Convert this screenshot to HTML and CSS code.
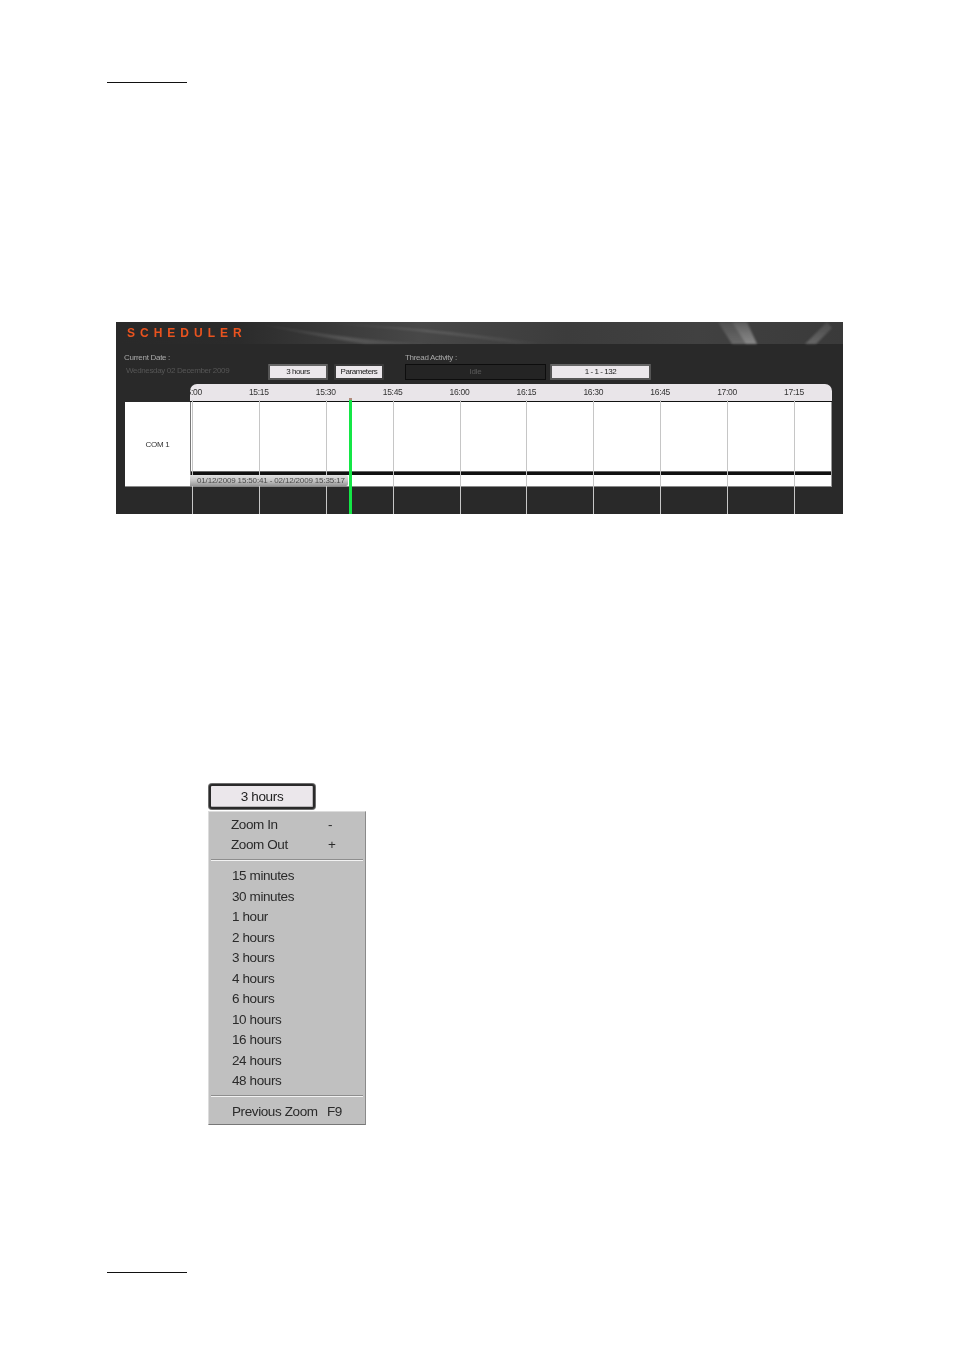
FILE: index.html
```html
<!DOCTYPE html>
<html lang="en">
<head>
<meta charset="utf-8">
<title>Scheduler</title>
<link rel="stylesheet" href="styles.css">
</head>
<body>
<div class="page">
  <div class="rule"></div>
  <section class="panel">
    <header class="band">
      <svg class="swirl" viewBox="0 0 727 22" preserveAspectRatio="none" aria-hidden="true">
        <defs>
          <linearGradient id="sw" x1="0" y1="0" x2="1" y2="0">
            <stop offset="0" stop-color="#fff" stop-opacity="0"/>
            <stop offset="0.5" stop-color="#fff" stop-opacity=".14"/>
            <stop offset="1" stop-color="#fff" stop-opacity="0"/>
          </linearGradient>
          <linearGradient id="st" x1="0" y1="0" x2="0" y2="1">
            <stop offset="0" stop-color="#fff" stop-opacity=".08"/>
            <stop offset="1" stop-color="#fff" stop-opacity=".22"/>
          </linearGradient>
        </defs>
        <path d="M130 0 C190 8 240 20 330 22 L250 22 C210 16 170 8 130 0Z" fill="url(#sw)"/>
        <path d="M190 0 C280 4 340 10 420 20 L430 22 L400 22 C340 12 270 5 190 0Z" fill="url(#sw)"/>
        <path d="M602 0 L616 22 L641 22 L631 0Z" fill="url(#st)"/>
        <path d="M616 0 L630 22 L641 22 L631 0Z" fill="url(#st)"/>
        <path d="M711 0 L689 22 L700 22 L716 6Z" fill="url(#st)"/>
      </svg>
      <h1 class="title">SCHEDULER</h1>
    </header>
    <div class="controls">
      <div class="date-col">
        <span class="label">Current Date :</span>
        <span class="date">Wednesday 02 December 2009</span>
      </div>
      <button class="btn btn-zoom">3 hours</button>
      <button class="btn btn-params">Parameters</button>
      <div class="thread-col">
        <span class="label">Thread Activity :</span>
        <div class="idle">Idle</div>
      </div>
      <button class="btn btn-range">1 - 1 - 132</button>
    </div>
    <div class="timeline">
      <div class="axis">
        <div class="axis-track">
          <span>15:00</span><span>15:15</span><span>15:30</span><span>15:45</span><span>16:00</span>
          <span>16:15</span><span>16:30</span><span>16:45</span><span>17:00</span><span>17:15</span>
        </div>
      </div>
      <div class="row">
        <div class="row-label">COM 1</div>
        <div class="chart">
          <div class="lane"></div>
          <div class="history"><div class="history-bar">01/12/2009 15:50:41 - 02/12/2009 15:35:17</div></div>
        </div>
      </div>
    </div>
    <div class="grid">
      <i></i><i></i><i></i><i></i><i></i><i></i><i></i><i></i><i></i><i></i>
    </div>
    <div class="now"></div>
  </section>

  <div class="menu-wrap">
    <button class="menu-btn">3 hours</button>
    <div class="menu">
      <div class="item cmd"><span class="name">Zoom In</span><span>-</span></div>
      <div class="item cmd"><span class="name">Zoom Out</span><span>+</span></div>
      <div class="sep"></div>
      <div class="item">15 minutes</div>
      <div class="item">30 minutes</div>
      <div class="item">1 hour</div>
      <div class="item">2 hours</div>
      <div class="item">3 hours</div>
      <div class="item">4 hours</div>
      <div class="item">6 hours</div>
      <div class="item">10 hours</div>
      <div class="item">16 hours</div>
      <div class="item">24 hours</div>
      <div class="item">48 hours</div>
      <div class="sep sep-last"></div>
      <div class="item prev"><span class="name">Previous Zoom</span><span>F9</span></div>
    </div>
  </div>
  <div class="rule rule-bottom"></div>
</div>
</body>
</html>
```
FILE: styles.css
```css
* { box-sizing: border-box; }
html, body { margin: 0; background: #fff; }
body { font-family: "Liberation Sans", Arial, sans-serif; color: #222; }
.page { padding: 82px 0 0 107px; width: 954px; height: 1350px; overflow: hidden; }
.rule { width: 80px; height: 1px; background: #111; }
.rule-bottom { margin-top: 147px; }

/* scheduler panel */
.panel { position: relative; width: 727px; height: 192px; margin: 239px 0 0 9px; background: #292929; overflow: hidden; filter: blur(.35px); }
.band { position: relative; height: 22px; background: linear-gradient(90deg, #292929 0, #2b2b2b 17%, #484848 42%, #3c3c3c 62%, #414141 80%, #3a3a3a 100%); }
.swirl { position: absolute; inset: 0; width: 100%; height: 100%; filter: blur(1px); }
.title { position: relative; margin: 0; padding: 5px 0 0 11px; font-size: 12px; line-height: 13px; font-weight: 700; letter-spacing: 5px; color: #e9531f; }

.controls { display: flex; align-items: flex-end; height: 40px; padding: 0 0 4px 8px; }
.label { display: block; font-size: 8px; line-height: 10px; letter-spacing: -.3px; color: #a9a9a9; }
.date-col { width: 144px; align-self: flex-end; padding-bottom: 3px; }
.date-col .label { margin-bottom: 3px; }
.date { display: block; margin-left: 2px; font-size: 8px; line-height: 10px; letter-spacing: -.35px; color: #565656; white-space: nowrap; padding-bottom: 1px; }
.btn { display: block; height: 16px; padding: 0; border: 2px solid #555; border-top-color: #666; border-radius: 1px; background: #ebe7eb; font: 8px/12px "Liberation Sans", Arial, sans-serif; letter-spacing: -.45px; color: #222; }
.btn-zoom { width: 60px; }
.btn-params { width: 50px; margin-left: 6px; border-color: #3a3a3a; }
.thread-col { width: 141px; margin-left: 21px; }
.thread-col .label { margin-bottom: 1px; }
.idle { height: 16px; border: 1px solid #0d0d0d; background: #242424; font-size: 8px; line-height: 14px; text-align: center; color: #5a5a5a; letter-spacing: -.2px; }
.btn-range { width: 101px; margin-left: 4px; }

.timeline { width: 707px; margin-left: 9px; }
.axis { height: 18px; margin-left: 65px; border-radius: 7px 7px 0 0; background: #e9e5e9; border-bottom: 1px solid #111; overflow: hidden; }
.axis-track { display: flex; margin-left: -31.5px; padding-top: 3px; }
.axis-track span { flex: 0 0 66.9px; text-align: center; font-size: 8.5px; line-height: 10px; letter-spacing: -.3px; color: #333; }
.row { display: flex; height: 85px; }
.row-label { width: 65px; background: #fff; border-bottom: 1px solid #888; display: flex; align-items: center; justify-content: center; font-size: 8px; letter-spacing: -.3px; color: #333; }
.chart { flex: 1; display: flex; flex-direction: column; border-left: 1px solid #777; border-right: 1px solid #999; border-bottom: 1px solid #888; background: #fff; }
.lane { height: 73px; border-bottom: 3px solid #111; box-shadow: inset 0 -1px 0 #666; }
.history { flex: 1; }
.history-bar { position: relative; z-index: 2; width: 158px; height: 11px; margin-left: -1px; background: linear-gradient(180deg, #e2e2e2 0, #c4c4c4 50%, #969696 100%); border-radius: 0 2px 2px 0; font-size: 8px; line-height: 12px; letter-spacing: -.15px; color: #4a4a4a; padding-left: 7px; white-space: nowrap; }

.grid { position: absolute; left: 76px; top: 78px; bottom: 0; display: flex; z-index: 1; }
.grid i { flex: 0 0 66.9px; border-left: 1px solid #c6c6c6; }
.now { position: absolute; left: 232.5px; top: 78px; bottom: 0; width: 3px; background: #14e646; z-index: 3; }
.now::before { content: ""; position: absolute; left: 0; top: -2px; width: 3px; height: 2px; background: #b08a7a; }

/* zoom menu */
.menu-wrap { width: 158px; margin: 270px 0 0 101px; filter: blur(.35px); }
.menu-btn { display: block; width: 106px; height: 25px; margin: 0 1px; padding: 0; border: 2px solid #2a2a2a; border-radius: 3px; box-shadow: 0 0 0 1px #6e6e6e, inset -1px -1px 0 #b9b6b9; background: #ebe7eb; font: 13.5px/20px "Liberation Sans", Arial, sans-serif; letter-spacing: -.35px; color: #222; }
.menu { height: 314px; margin-top: 2px; padding-top: 3px; background: #c0c0c0; border: 1px solid #dcdcdc; border-right-color: #8a8a8a; border-bottom-color: #777; font-size: 13.5px; letter-spacing: -.4px; color: #2a2a2a; }
.item { height: 20.5px; padding-left: 23px; line-height: 20px; white-space: nowrap; }
.cmd { display: flex; height: 20px; padding-left: 22px; }
.name { display: block; }
.cmd .name { width: 97px; }
.prev { display: flex; }
.prev .name { width: 95px; }
.sep { height: 2px; margin: 4px 2px 5px 2px; background: #8e8e8e; border-bottom: 1px solid #f2f2f2; }
.sep-last { margin: 3px 2px 5px 2px; }
```
